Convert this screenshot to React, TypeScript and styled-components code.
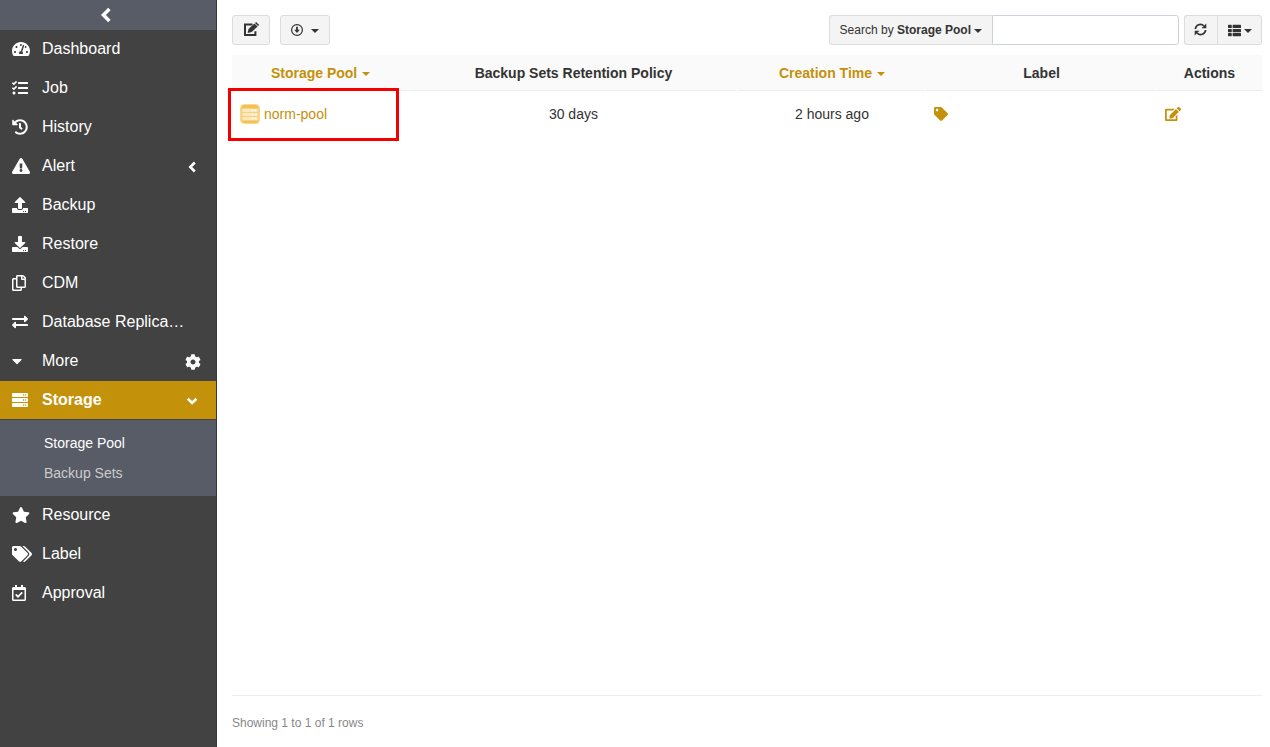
import React from "react";
import styled, { createGlobalStyle, css } from "styled-components";
import {
  FaTachometerAlt, FaTasks, FaHistory, FaExclamationTriangle, FaUpload, FaDownload,
  FaRegCopy, FaExchangeAlt, FaCaretDown, FaCog, FaServer, FaStar, FaTags, FaTag,
  FaRegCalendarCheck, FaEdit, FaThList,
} from "react-icons/fa";
import type { IconType } from "react-icons";

const gold = "#c4910a";
const slate = "#585c67";

const GlobalStyle = createGlobalStyle`
  *, *::before, *::after { box-sizing: border-box; }
  body {
    margin: 0;
    background: #fff;
    color: #333;
    font-family: "Liberation Sans", Arial, sans-serif;
    font-size: 14px;
    line-height: 20px;
  }
  button, input { font: inherit; color: inherit; }
  a { color: inherit; text-decoration: none; }
  svg { display: block; flex: none; }
`;

const Page = styled.div`
  display: flex;
  min-height: 100vh;
`;

const Sidebar = styled.nav`
  flex: none;
  width: 217px;
  background: #424242;
  border-right: 1px solid #383838;
  color: #fff;
`;

const Collapse = styled.button`
  display: flex;
  align-items: center;
  justify-content: center;
  width: 100%;
  height: 30px;
  padding: 0 2px 0 0;
  border: 0;
  background: ${slate};
  color: #fff;
`;

const NavList = styled.ul`
  margin: 0;
  padding: 0;
  list-style: none;
`;

const NavLink = styled.a<{ $active?: boolean }>`
  display: flex;
  align-items: center;
  height: 38px;
  margin-bottom: 1px;
  padding: 0 14px 0 12px;
  font-size: 16px;
  ${(p) => p.$active && css`
    background: ${gold};
    font-weight: bold;
  `}
`;

const NavIcon = styled.span<{ $width: number }>`
  flex: none;
  width: 30px;

  svg {
    width: ${(p) => p.$width}px;
    height: 16px;
  }
`;

const NavText = styled.span`
  flex: 1;
  white-space: nowrap;
`;

const NavEnd = styled.span`
  display: flex;
  justify-content: center;
  width: 18px;
  margin-left: auto;
  padding-top: 2px;
`;

const SubMenu = styled.ul`
  margin: 0;
  padding: 8px 0;
  list-style: none;
  background: ${slate};
`;

const SubLink = styled.a<{ $active?: boolean }>`
  display: block;
  padding: 5px 15px 5px 44px;
  color: ${(p) => (p.$active ? "#fff" : "#ccc")};
`;

const Main = styled.main`
  display: flex;
  flex: 1;
  flex-direction: column;
  min-width: 0;
  padding: 15px 8px 0 15px;
`;

const Toolbar = styled.div`
  display: flex;
  justify-content: space-between;
  height: 30px;
  margin-bottom: 10px;
`;

const Tools = styled.div<{ $gap: number }>`
  display: flex;
  gap: ${(p) => p.$gap}px;
`;

const Group = styled.div`
  display: flex;
`;

const Button = styled.button<{ $width?: number; $join?: "left" | "right"; $gap?: number }>`
  display: flex;
  align-items: center;
  justify-content: center;
  gap: ${(p) => p.$gap ?? 0}px;
  width: ${(p) => (p.$width ? `${p.$width}px` : "auto")};
  height: 30px;
  padding: 0 10px;
  border: 1px solid #dcdcdc;
  border-radius: ${(p) => (p.$join === "right" ? "3px 0 0 3px" : p.$join === "left" ? "0 3px 3px 0" : "3px")};
  border-right-width: ${(p) => (p.$join === "right" ? 0 : 1)}px;
  background: #f4f4f4;
  font-size: 12px;
  white-space: pre;
`;

const Caret = styled.span`
  width: 8px;
  margin-top: 2px;
  border: 4px solid transparent;
  border-top-color: currentColor;
  border-bottom: 0;
`;

const SearchInput = styled.input`
  width: 187px;
  height: 30px;
  padding: 5px 10px;
  border: 1px solid #ced2dc;
  border-radius: 0 3px 3px 0;
  background: #fff;
  font-size: 12px;
`;

const TableArea = styled.div`
  flex: 1;
  border-bottom: 1px solid #eee;
`;

const Table = styled.table`
  width: 100%;
  table-layout: fixed;
  border-collapse: separate;
  border-spacing: 0;
`;

const HeadCell = styled.th<{ $width: string; $sortable?: boolean }>`
  position: relative;
  width: ${(p) => p.$width};
  height: 36px;
  padding: 0 8px;
  border-bottom: 1px solid #eee;
  background: #fafafa;
  color: ${(p) => (p.$sortable ? gold : "#333")};
  text-align: center;
  white-space: nowrap;

  &:not(:last-child)::after {
    content: "";
    position: absolute;
    right: 0;
    bottom: -1px;
    width: 2px;
    height: 36px;
    background: #fafafa;
  }
`;

const SortButton = styled.button`
  display: inline-flex;
  align-items: center;
  gap: 5px;
  padding: 0;
  border: 0;
  background: none;
  font-weight: bold;
`;

const Cell = styled.td<{ $start?: boolean }>`
  position: relative;
  height: 46px;
  padding: 0 8px;
  text-align: ${(p) => (p.$start ? "left" : "center")};
`;

const Highlight = styled.span`
  position: absolute;
  inset: -3px 10px -4px -4px;
  border: 3px solid #f50000;
  pointer-events: none;
`;

const PoolLink = styled.a`
  display: flex;
  align-items: center;
  gap: 4px;
  color: ${gold};
`;

const IconButton = styled.button`
  display: block;
  padding: 0;
  border: 0;
  background: none;
  color: ${gold};
`;

const Footer = styled.footer`
  height: 51px;
  padding-top: 17px;
  color: #888;
  font-size: 12px;
`;

function ChevronGlyph({ size, down }: { size: number; down?: boolean }) {
  return (
    <svg
      width={size}
      height={size}
      viewBox="0 0 12 12"
      fill="none"
      stroke="currentColor"
      strokeWidth="2.6"
      aria-hidden="true"
    >
      <path d={down ? "M.8 3.800L5.100 8l4.300-4.200" : "M7.800 1.500L3.300 6l4.500 4.500"} />
    </svg>
  );
}

type Item = { label: string; icon: IconType; width?: number; end?: React.ReactNode };

const upperItems: Item[] = [
  { label: "Dashboard", icon: FaTachometerAlt, width: 18 },
  { label: "Job", icon: FaTasks },
  { label: "History", icon: FaHistory },
  { label: "Alert", icon: FaExclamationTriangle, width: 18, end: <ChevronGlyph size={12} /> },
  { label: "Backup", icon: FaUpload },
  { label: "Restore", icon: FaDownload },
  { label: "CDM", icon: FaRegCopy, width: 14 },
  { label: "Database Replica…", icon: FaExchangeAlt },
  { label: "More", icon: FaCaretDown, width: 10, end: <FaCog size={16} /> },
];

const lowerItems: Item[] = [
  { label: "Resource", icon: FaStar, width: 18 },
  { label: "Label", icon: FaTags, width: 20 },
  { label: "Approval", icon: FaRegCalendarCheck, width: 14 },
];

function NavItem({ item }: { item: Item }) {
  const Icon = item.icon;
  return (
    <li>
      <NavLink href="#">
        <NavIcon $width={item.width ?? 16}><Icon /></NavIcon>
        <NavText>{item.label}</NavText>
        {item.end && <NavEnd>{item.end}</NavEnd>}
      </NavLink>
    </li>
  );
}

function EditGlyph() {
  return (
    <svg width="17" height="16" viewBox="0 0 17 16" fill="none" aria-hidden="true">
      <path d="M9.500 2.500H2v10.600h10.400V9.300" stroke="currentColor" strokeWidth="2" />
      <path d="M4.600 10.900l.9-3.900 5.900-5.600 3.200 3.100-5.900 5.500z" fill="currentColor" />
      <path d="M12 .9L13.100 0l3.100 2.900-1.100 1.100z" fill="currentColor" />
    </svg>
  );
}

function CircleDownGlyph() {
  return (
    <svg width="12" height="12" viewBox="0 0 12 12" fill="none" aria-hidden="true">
      <circle cx="6" cy="6" r="5.400" stroke="currentColor" strokeWidth="1.200" />
      <path d="M5.100 2.800h1.800v3h1.900L6 9 3.200 5.800h1.900z" fill="currentColor" />
    </svg>
  );
}

function RefreshGlyph() {
  return (
    <svg width="14" height="14" viewBox="0 0 14 14" fill="none" stroke="currentColor" aria-hidden="true">
      <path d="M1.400 6A5 5 0 0 1 9.800 2.800M11.600 7a5 5 0 0 1-8.400 3.200" strokeWidth="1.700" />
      <path d="M12.300.4v4.800H7.500zM.7 12.600V7.800h4.800z" fill="currentColor" stroke="none" />
    </svg>
  );
}

function PoolGlyph() {
  return (
    <svg width="20" height="20" viewBox="0 0 20 20" aria-hidden="true">
      <rect x="0.500" y="0.500" width="19" height="19" rx="4" fill="#f2c152" />
      <rect x="1" y="4" width="18" height="13" fill="#f6d083" />
      <path d="M2.500 5h15v3h-15zM2.500 9h15v3h-15zM2.500 13h15v3h-15z" fill="#fbe8bd" />
      <path d="M12 6h1.500v1H12zM15 6h1.500v1H15zM12 10h1.500v1H12zM15 10h1.500v1H15zM12 14h1.500v1H12zM15 14h1.500v1H15z" fill="#fff" />
      <rect x="0.500" y="0.500" width="19" height="19" rx="4" fill="none" stroke="#f8d78f" />
    </svg>
  );
}

export default function App() {
  return (
    <>
      <GlobalStyle />
      <Page>
        <Sidebar aria-label="Main">
          <Collapse aria-label="Collapse sidebar"><ChevronGlyph size={16} /></Collapse>
          <NavList>
            {upperItems.map((item) => <NavItem key={item.label} item={item} />)}
            <li>
              <NavLink href="#" $active>
                <NavIcon $width={16}><FaServer /></NavIcon>
                <NavText>Storage</NavText>
                <NavEnd><ChevronGlyph size={12} down /></NavEnd>
              </NavLink>
              <SubMenu>
                <li><SubLink href="#" $active>Storage Pool</SubLink></li>
                <li><SubLink href="#">Backup Sets</SubLink></li>
              </SubMenu>
            </li>
            {lowerItems.map((item) => <NavItem key={item.label} item={item} />)}
          </NavList>
        </Sidebar>
        <Main>
          <Toolbar>
            <Tools $gap={10}>
              <Button $width={38} aria-label="Edit"><EditGlyph /></Button>
              <Button $width={50} $gap={8} aria-label="Export"><CircleDownGlyph /><Caret /></Button>
            </Tools>
            <Tools $gap={5}>
              <Group>
                <Button $join="right" $gap={3}>
                  <span>Search by <b>Storage Pool</b></span>
                  <Caret />
                </Button>
                <SearchInput type="text" aria-label="Search by Storage Pool" />
              </Group>
              <Group>
                <Button $join="right" $width={33} aria-label="Refresh"><RefreshGlyph /></Button>
                <Button $join="left" $width={45} $gap={3} aria-label="Columns"><FaThList size={13} /><Caret /></Button>
              </Group>
            </Tools>
          </Toolbar>
          <TableArea>
            <Table>
              <thead>
                <tr>
                  <HeadCell $width="17.2%" $sortable><SortButton>Storage Pool<Caret /></SortButton></HeadCell>
                  <HeadCell $width="31.9%">Backup Sets Retention Policy</HeadCell>
                  <HeadCell $width="18.3%" $sortable><SortButton>Creation Time<Caret /></SortButton></HeadCell>
                  <HeadCell $width="22.4%">Label</HeadCell>
                  <HeadCell $width="10.2%">Actions</HeadCell>
                </tr>
              </thead>
              <tbody>
                <tr>
                  <Cell $start>
                    <PoolLink href="#"><PoolGlyph />norm-pool</PoolLink>
                    <Highlight />
                  </Cell>
                  <Cell>30 days</Cell>
                  <Cell>2 hours ago</Cell>
                  <Cell><IconButton aria-label="Edit labels"><FaTag size={14} /></IconButton></Cell>
                  <Cell><IconButton aria-label="Edit pool"><FaEdit size={16} /></IconButton></Cell>
                </tr>
              </tbody>
            </Table>
          </TableArea>
          <Footer>Showing 1 to 1 of 1 rows</Footer>
        </Main>
      </Page>
    </>
  );
}
